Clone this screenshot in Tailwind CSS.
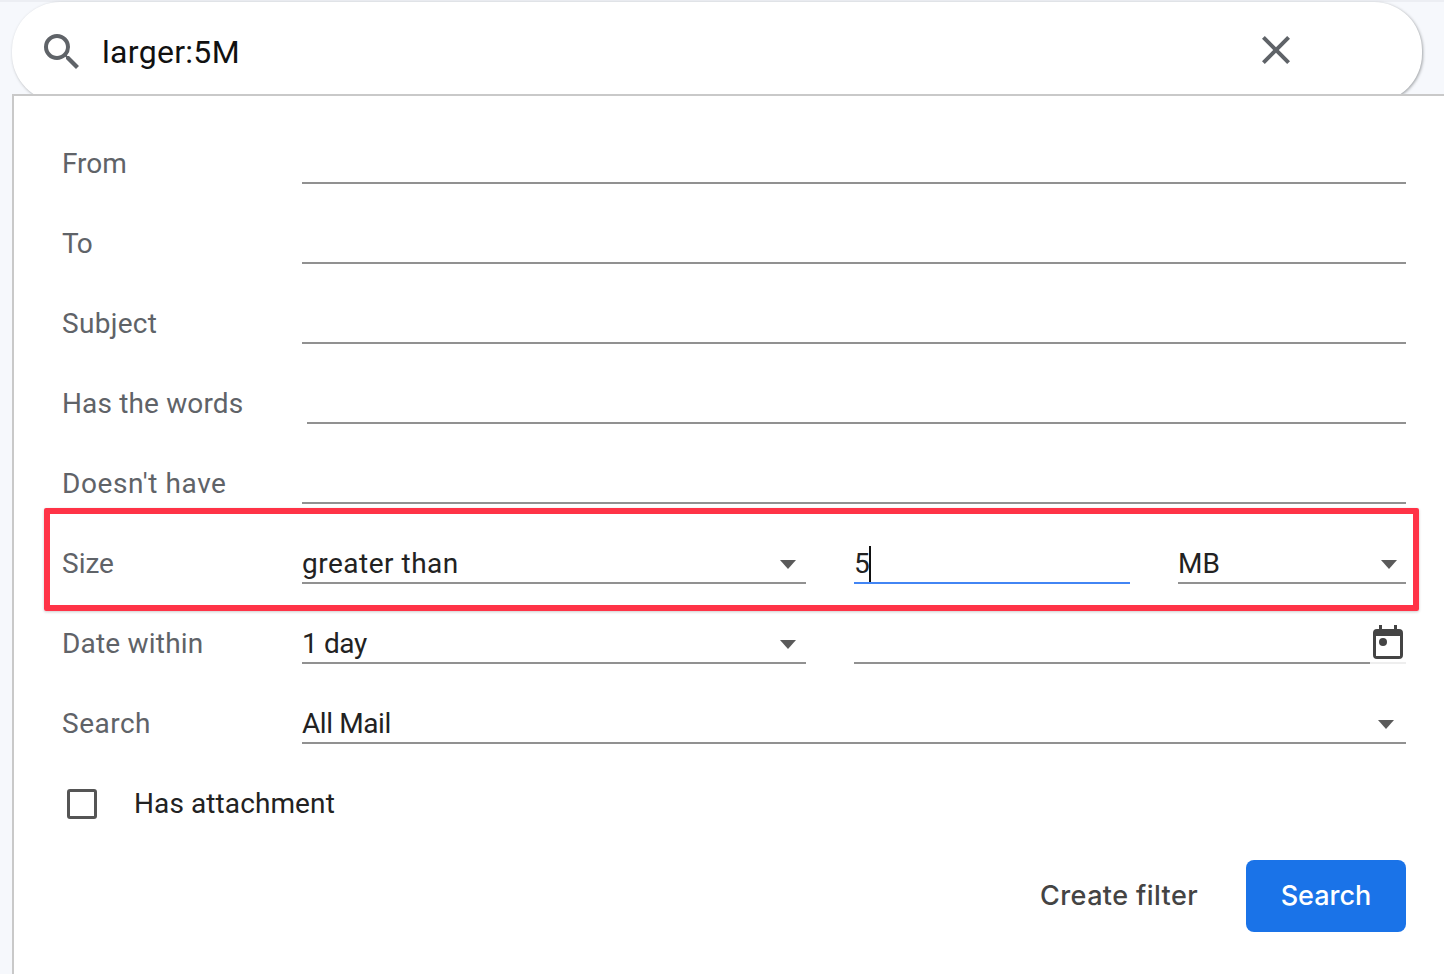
<!DOCTYPE html>
<html lang="en">
<head>
  <meta charset="UTF-8" />
  <title>Gmail search</title>
  <script src="https://cdn.jsdelivr.net/npm/@tailwindcss/browser@4"></script>
</head>
<body class="bg-[#f6f8fc] h-[974px] w-[1444px] overflow-hidden font-['Roboto',sans-serif] relative">
  <div class="h-[2px] bg-[#eceef3]"></div>

  <!-- search bar -->
  <div class="ml-[12px] w-[1410px] h-[100px] bg-white rounded-[48px] shadow-[1px_1px_3px_rgba(60,64,67,0.45)] flex items-start pt-[26px] pl-[26px]">
    <svg class="w-[48px] h-[48px] shrink-0" viewBox="0 0 24 24" fill="#5f6368"><path d="M15.5 14h-.79l-.28-.27A6.47 6.47 0 0 0 16 9.5 6.5 6.5 0 1 0 9.5 16c1.61 0 3.09-.59 4.23-1.57l.27.28v.79l5 4.99L20.49 19l-4.99-5zm-6 0C7.01 14 5 11.99 5 9.5S7.01 5 9.5 5 14 7.01 14 9.5 11.99 14 9.5 14z"/></svg>
    <span class="ml-[16px] mt-[4px] text-[32px] leading-[40px] tracking-[0.3px] text-[#111] w-[1150px] shrink-0">larger:5M</span>
    <svg class="w-[48px] h-[48px] mt-[-2px] shrink-0" viewBox="0 0 24 24" fill="#5f6368"><path d="M19 6.41 17.59 5 12 10.59 6.41 5 5 6.41 10.59 12 5 17.59 6.41 19 12 13.41 17.59 19 19 17.59 13.41 12z"/></svg>
  </div>

  <!-- panel -->
  <div class="absolute left-[12px] top-[94px] w-[1432px] h-[880px] bg-white border-t-2 border-l-2 border-[#c9c9c9] pl-[48px] pr-[38px] pt-[8px] text-[28px] leading-[36px]">
    <div class="flex h-[80px] items-end">
      <label class="w-[240px] h-[80px] pt-[42px] text-[#5f6368]">From</label>
      <div class="flex-1 h-[2px] bg-[#919191]"></div>
    </div>
    <div class="flex h-[80px] items-end">
      <label class="w-[240px] h-[80px] pt-[42px] text-[#5f6368] tracking-[-0.5px]">To</label>
      <div class="flex-1 h-[2px] bg-[#919191]"></div>
    </div>
    <div class="flex h-[80px] items-end">
      <label class="w-[240px] h-[80px] pt-[42px] text-[#5f6368] tracking-[0.3px]">Subject</label>
      <div class="flex-1 h-[2px] bg-[#919191]"></div>
    </div>
    <div class="flex h-[80px] items-end">
      <label class="w-[245px] h-[80px] pt-[42px] text-[#5f6368] tracking-[0.15px]">Has the words</label>
      <div class="flex-1 h-[2px] bg-[#919191]"></div>
    </div>
    <div class="flex h-[80px] items-end">
      <label class="w-[240px] h-[80px] pt-[42px] text-[#5f6368] tracking-[0.6px]">Doesn't have</label>
      <div class="flex-1 h-[2px] bg-[#919191]"></div>
    </div>

    <!-- size -->
    <div class="flex h-[80px] items-end">
      <label class="w-[240px] h-[80px] pt-[42px] text-[#5f6368]">Size</label>
      <div class="w-[504px] h-[80px] pt-[42px] border-b-2 border-[#919191] flex justify-between text-[#222]">
        <span class="tracking-[0.5px]">greater than</span>
        <svg class="w-[20px] h-[12px] mt-[12px] mr-[8px]" viewBox="0 0 20 12" fill="#5a5a5a"><path d="M2 2h16l-8 9z"/></svg>
      </div>
      <div class="ml-[48px] w-[276px] h-[80px] pt-[42px] border-b-2 border-[#4285f4] text-[#222] flex">
        <span class="tracking-[-1px]">5</span><span class="w-[2px] h-[36px] bg-[#111]"></span>
      </div>
      <div class="ml-[48px] flex-1 h-[80px] pt-[42px] border-b-2 border-[#919191] flex justify-between text-[#222]">
        <span>MB</span>
        <svg class="w-[20px] h-[12px] mt-[12px] mr-[7px]" viewBox="0 0 20 12" fill="#5a5a5a"><path d="M2 2h16l-8 9z"/></svg>
      </div>
    </div>

    <!-- date -->
    <div class="flex h-[80px] items-end">
      <label class="w-[240px] h-[80px] pt-[42px] text-[#5f6368] tracking-[0.2px]">Date within</label>
      <div class="w-[504px] h-[80px] pt-[42px] border-b-2 border-[#919191] flex justify-between text-[#222]">
        <span class="tracking-[-0.4px]">1 day</span>
        <svg class="w-[20px] h-[12px] mt-[12px] mr-[8px]" viewBox="0 0 20 12" fill="#5a5a5a"><path d="M2 2h16l-8 9z"/></svg>
      </div>
      <div class="ml-[48px] w-[516px] h-[2px] bg-[#919191]"></div>
      <div class="relative flex-1 h-[2px] bg-[#eeeeee]">
        <svg class="absolute left-[0px] top-[-38px] w-[36px] h-[36px]" viewBox="0 0 36 36" fill="#444"><path fill-rule="evenodd" d="M9 1h3v4h12V1h3v4h2a4 4 0 0 1 4 4v22a4 4 0 0 1-4 4H7a4 4 0 0 1-4-4V9a4 4 0 0 1 4-4h2V1zM6 12v20h24V12H6z"/><circle cx="13" cy="18" r="4"/></svg>
      </div>
    </div>

    <!-- search in -->
    <div class="flex h-[80px] items-end">
      <label class="w-[240px] h-[80px] pt-[42px] text-[#5f6368] tracking-[0.5px]">Search</label>
      <div class="flex-1 h-[80px] pt-[42px] border-b-2 border-[#919191] flex justify-between text-[#222]">
        <span class="tracking-[-0.4px]">All Mail</span>
        <svg class="w-[20px] h-[12px] mt-[12px] mr-[10px]" viewBox="0 0 20 12" fill="#5a5a5a"><path d="M2 2h16l-8 9z"/></svg>
      </div>
    </div>

    <!-- attachment -->
    <div class="flex items-center mt-[42px] h-[36px]">
      <span class="ml-[5px] w-[30px] h-[30px] border-[3px] border-[#555] rounded-[3px]"></span>
      <span class="ml-[37px] text-[#222] tracking-[0.1px]">Has attachment</span>
    </div>

    <!-- actions -->
    <div class="flex justify-end items-center mt-[38px] font-['Inter',sans-serif] font-medium text-[27px]">
      <span class="text-[#444] mr-[48px] tracking-[0.4px]">Create filter</span>
      <button class="w-[160px] h-[72px] rounded-[8px] bg-[#1a73e8] text-white">Search</button>
    </div>
  </div>

  <!-- highlight -->
  <div class="absolute left-[44px] top-[508px] w-[1375px] h-[103px] border-[6px] border-[#ff3347] rounded-[2px] shadow-[0_1px_3px_rgba(0,0,0,0.2)]"></div>
</body>
</html>
